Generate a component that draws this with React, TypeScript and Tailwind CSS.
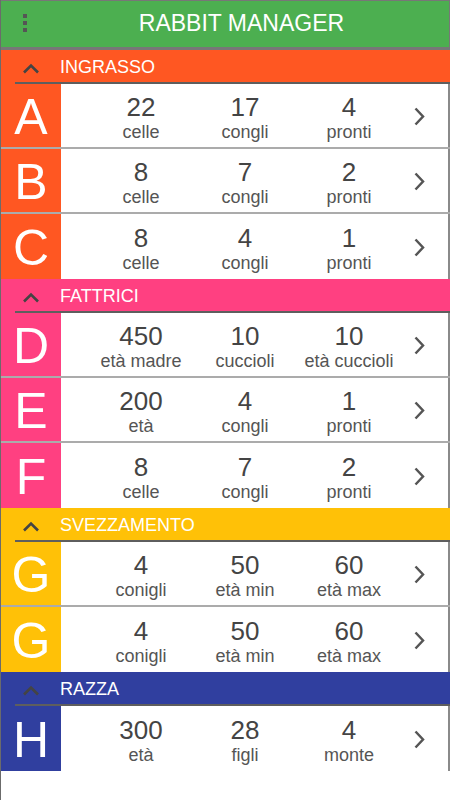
type Row = {
  letter: string;
  stats: [string, string][];
};

type Section = {
  title: string;
  color: string;
  rows: Row[];
};

const sections: Section[] = [
  {
    title: "INGRASSO",
    color: "bg-[#ff5722]",
    rows: [
      { letter: "A", stats: [["22", "celle"], ["17", "congli"], ["4", "pronti"]] },
      { letter: "B", stats: [["8", "celle"], ["7", "congli"], ["2", "pronti"]] },
      { letter: "C", stats: [["8", "celle"], ["4", "congli"], ["1", "pronti"]] },
    ],
  },
  {
    title: "FATTRICI",
    color: "bg-[#ff4081]",
    rows: [
      { letter: "D", stats: [["450", "età madre"], ["10", "cuccioli"], ["10", "età cuccioli"]] },
      { letter: "E", stats: [["200", "età"], ["4", "congli"], ["1", "pronti"]] },
      { letter: "F", stats: [["8", "celle"], ["7", "congli"], ["2", "pronti"]] },
    ],
  },
  {
    title: "SVEZZAMENTO",
    color: "bg-[#ffc107]",
    rows: [
      { letter: "G", stats: [["4", "conigli"], ["50", "età min"], ["60", "età max"]] },
      { letter: "G", stats: [["4", "conigli"], ["50", "età min"], ["60", "età max"]] },
    ],
  },
  {
    title: "RAZZA",
    color: "bg-[#303f9f]",
    rows: [{ letter: "H", stats: [["300", "età"], ["28", "figli"], ["4", "monte"]] }],
  },
];

function SectionHeader({ title, color }: { title: string; color: string }) {
  return (
    <div className={`relative flex h-[34px] items-center ${color}`}>
      <svg className="ml-[21px] mt-[2px]" width="18" height="11" viewBox="0 0 18 11" fill="none" aria-hidden>
        <path d="M2 9.5 L9 2.5 L16 9.5" stroke="#444" strokeWidth="2.6" />
      </svg>
      <span className="ml-[20px] text-[18px] leading-none text-white">{title}</span>
      <div className="absolute bottom-0 left-[14px] right-0 h-[2px] bg-[#5e5e5e]" />
    </div>
  );
}

function RowItem({ row, color, last }: { row: Row; color: string; last: boolean }) {
  return (
    <div className={`flex h-[65px] ${last ? "" : "border-b-2 border-[#ababab]"}`}>
      <div
        className={`flex w-[60px] shrink-0 items-center justify-center pt-[2px] text-[50px] leading-none text-white ${color}`}
      >
        {row.letter}
      </div>
      <div className="flex flex-1 items-center border-r-2 border-[#8a8a8a] pl-[28px] pt-[5px]">
        {row.stats.map(([value, label], i) => (
          <div key={i} className="flex w-[104px] flex-col items-center">
            <span className="text-[26px] leading-[28px] text-[#444]">{value}</span>
            <span className="text-[18px] leading-[22px] text-[#555]">{label}</span>
          </div>
        ))}
        <svg className="mb-[3px] ml-[13px]" width="11" height="19" viewBox="0 0 11 19" fill="none" aria-hidden>
          <path d="M1.5 1.5 L9 9.5 L1.5 17.5" stroke="#555" strokeWidth="2.5" />
        </svg>
      </div>
    </div>
  );
}

export default function App() {
  return (
    <div
      className="h-[800px] w-[450px] overflow-hidden border-l border-[#6b6b6b] bg-white"
      style={{ fontFamily: "'Liberation Sans', Arial, sans-serif" }}
    >
      <div className="relative flex h-[50px] items-center justify-center border-b-[3px] border-t border-r border-[#777] bg-[#4caf50]">
        <div className="absolute left-[22px] top-[13px] flex flex-col gap-[3px]">
          <span className="h-[4px] w-[4px] bg-[#555]" />
          <span className="h-[4px] w-[4px] bg-[#555]" />
          <span className="h-[4px] w-[4px] bg-[#555]" />
        </div>
        <span className="ml-[33px] pb-[2px] text-[23px] leading-none text-white">RABBIT MANAGER</span>
      </div>
      {sections.map((section) => (
        <div key={section.title}>
          <SectionHeader title={section.title} color={section.color} />
          {section.rows.map((row, i) => (
            <RowItem
              key={i}
              row={row}
              color={section.color}
              last={i === section.rows.length - 1}
            />
          ))}
        </div>
      ))}
    </div>
  );
}
